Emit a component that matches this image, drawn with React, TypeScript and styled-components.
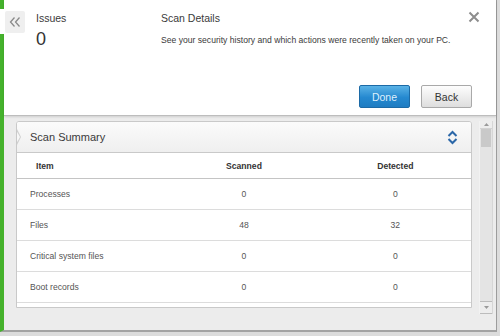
import React from "react";
import styled, { createGlobalStyle } from "styled-components";

const GlobalStyle = createGlobalStyle`
  html, body {
    margin: 0;
    padding: 0;
    background: #dcdcdc;
  }
  body {
    font-family: "Liberation Sans", Arial, sans-serif;
    color: #333;
  }
`;

const green = "#45b22c";
const line = "#c9c9c9";

const Frame = styled.div`
  width: 500px;
  height: 336px;
  overflow: hidden;
`;

const Window = styled.div`
  position: relative;
  display: flex;
  flex-direction: column;
  box-sizing: border-box;
  width: 497px;
  height: 332px;
  border-left: 4px solid ${green};
  border-right: 1px solid #9c9c9c;
  border-bottom: 2px solid #a3a3a3;
  background: #ececec;
`;

const BackTab = styled.button`
  position: absolute;
  left: -4px;
  top: 9px;
  display: flex;
  align-items: center;
  width: 29px;
  height: 25px;
  padding: 0 0 0 5px;
  border: none;
  border-radius: 0 3px 3px 0;
  background: #fff;
  cursor: pointer;
`;

const BackTabFace = styled.span`
  display: flex;
  align-items: center;
  justify-content: center;
  width: 20px;
  height: 22px;
  background: #efefef;
  border-radius: 2px;
`;

const Header = styled.header`
  display: flex;
  flex-direction: column;
  height: 115px;
  background: #fff;
  border-bottom: 1px solid #bdbdbd;
  box-shadow: 0 1px 2px rgba(0, 0, 0, 0.12);
`;

const TopRow = styled.div`
  display: flex;
  padding: 11px 0 0 32px;
`;

const IssuesCol = styled.div`
  width: 125px;
`;

const DetailsCol = styled.div`
  flex: 1;
`;

const Label = styled.div`
  font-size: 10.5px;
  line-height: 14px;
  color: #3a3a3a;
`;

const Count = styled.div`
  margin-top: 3px;
  font-size: 18px;
  line-height: 22px;
  color: #333;
`;

const Description = styled.p`
  margin: 9px 0 0;
  font-size: 8.6px;
  line-height: 12px;
  color: #3a3a3a;
`;

const CloseButton = styled.button`
  align-self: flex-start;
  margin: 0 16px 0 0;
  padding: 0;
  width: 12px;
  height: 12px;
  border: none;
  background: none;
  cursor: pointer;
`;

const Actions = styled.div`
  display: flex;
  justify-content: flex-end;
  gap: 11px;
  margin-top: auto;
  padding: 0 24px 7px 0;
`;

const ActionButton = styled.button<{ $primary?: boolean }>`
  width: 51px;
  height: 23px;
  padding: 0;
  font-family: "Liberation Sans", Arial, sans-serif;
  font-size: 10.5px;
  border-radius: 2px;
  cursor: pointer;
  color: ${(p) => (p.$primary ? "#dff0fc" : "#333")};
  border: 1px solid ${(p) => (p.$primary ? "#1c6aa6" : "#a9a9a9")};
  background: ${(p) =>
    p.$primary
      ? "linear-gradient(#5ab2e6, #2589d0 55%, #1f7cc2)"
      : "linear-gradient(#fdfdfd, #ececec 55%, #dedede)"};
`;

const Body = styled.div`
  flex: 1;
  display: flex;
  gap: 7px;
  padding: 5px 3px 0 12px;
  min-height: 0;
`;

const Card = styled.section`
  flex: 1;
  display: flex;
  flex-direction: column;
  height: 187px;
  box-sizing: border-box;
  border: 1px solid ${line};
  border-radius: 3px 3px 0 0;
  background: #fff;
  overflow: hidden;
`;

const CardHeader = styled.div`
  position: relative;
  display: flex;
  align-items: center;
  justify-content: space-between;
  height: 30px;
  padding: 0 13px 0 13px;
  border-bottom: 1px solid ${line};
  background: linear-gradient(#fbfbfb, #efefef);
  font-size: 11px;
  color: #3a3a3a;

  &::before {
    content: "";
    position: absolute;
    left: 0;
    top: 7px;
    border-top: 8px solid transparent;
    border-bottom: 8px solid transparent;
    border-left: 4px solid #cfcfcf;
  }
  &::after {
    content: "";
    position: absolute;
    left: -1px;
    top: 8px;
    border-top: 7px solid transparent;
    border-bottom: 7px solid transparent;
    border-left: 4px solid #f7f7f7;
  }
`;

const Row = styled.div<{ $head?: boolean }>`
  display: grid;
  grid-template-columns: 1fr 1fr 1fr;
  align-items: center;
  height: ${(p) => (p.$head ? 25 : 30)}px;
  border-bottom: 1px solid ${(p) => (p.$head ? "#c4c4c4" : "#dcdcdc")};
  font-size: 8.6px;
  font-weight: ${(p) => (p.$head ? 700 : 400)};
  color: ${(p) => (p.$head ? "#333" : "#555")};
`;

const Cell = styled.div<{ $first?: boolean; $head?: boolean }>`
  text-align: ${(p) => (p.$first ? "left" : "center")};
  padding-left: ${(p) => (p.$first ? (p.$head ? 19 : 13) : 0)}px;
`;

const Scrollbar = styled.div`
  display: flex;
  flex-direction: column;
  width: 12px;
  height: 193px;
  background: #e4e4e4;
  border-left: 1px solid #f2f2f2;
  border-right: 1px solid #d6d6d6;
`;

const ScrollArrow = styled.div<{ $h: number }>`
  display: flex;
  align-items: center;
  justify-content: center;
  height: ${(p) => p.$h}px;
  background: #ededed;
  border-bottom: 1px solid #d2d2d2;
`;

const Thumb = styled.div`
  height: 18px;
  background: #c9c9c9;
  margin: 0 1px;
`;

const Track = styled.div`
  flex: 1;
`;

const DownArrow = styled(ScrollArrow)`
  border-top: 1px solid #bcbcbc;
  border-bottom: 1px solid #bcbcbc;
`;

const rows = [
  { item: "Processes", scanned: 0, detected: 0 },
  { item: "Files", scanned: 48, detected: 32 },
  { item: "Critical system files", scanned: 0, detected: 0 },
  { item: "Boot records", scanned: 0, detected: 0 },
];

export default function App() {
  return (
    <Frame>
      <GlobalStyle />
      <Window>
        <BackTab aria-label="Back">
          <BackTabFace>
            <svg width="12" height="12" viewBox="0 0 12 12">
              <path
                d="M5.5 1.5 L1.5 6 L5.5 10.5 M10.5 1.5 L6.5 6 L10.5 10.5"
                fill="none"
                stroke="#8a8a8a"
                strokeWidth="1.3"
              />
            </svg>
          </BackTabFace>
        </BackTab>
        <Header>
          <TopRow>
            <IssuesCol>
              <Label>Issues</Label>
              <Count>0</Count>
            </IssuesCol>
            <DetailsCol>
              <Label>Scan Details</Label>
              <Description>
                See your security history and which actions were recently taken on your PC.
              </Description>
            </DetailsCol>
            <CloseButton aria-label="Close">
              <svg width="12" height="12" viewBox="0 0 12 12">
                <path d="M1.5 1.5 L10.5 10.5 M10.5 1.5 L1.5 10.5" stroke="#8d8d8d" strokeWidth="2" />
              </svg>
            </CloseButton>
          </TopRow>
          <Actions>
            <ActionButton $primary>Done</ActionButton>
            <ActionButton>Back</ActionButton>
          </Actions>
        </Header>
        <Body>
          <Card>
            <CardHeader>
              <span>Scan Summary</span>
              <svg width="11" height="15" viewBox="0 0 11 15">
                <path
                  d="M1.5 6 L5.5 2 L9.5 6 M1.5 9 L5.5 13 L9.5 9"
                  fill="none"
                  stroke="#2b67a8"
                  strokeWidth="2"
                />
              </svg>
            </CardHeader>
            <Row $head>
              <Cell $first $head>Item</Cell>
              <Cell>Scanned</Cell>
              <Cell>Detected</Cell>
            </Row>
            {rows.map((r) => (
              <Row key={r.item}>
                <Cell $first>{r.item}</Cell>
                <Cell>{r.scanned}</Cell>
                <Cell>{r.detected}</Cell>
              </Row>
            ))}
          </Card>
          <Scrollbar>
            <ScrollArrow $h={7}>
              <svg width="5" height="3" viewBox="0 0 5 3">
                <path d="M0 3 L2.5 0 L5 3 Z" fill="#9a9a9a" />
              </svg>
            </ScrollArrow>
            <Thumb />
            <Track />
            <DownArrow $h={11}>
              <svg width="5" height="3" viewBox="0 0 5 3">
                <path d="M0 0 L2.5 3 L5 0 Z" fill="#9a9a9a" />
              </svg>
            </DownArrow>
          </Scrollbar>
        </Body>
      </Window>
    </Frame>
  );
}
